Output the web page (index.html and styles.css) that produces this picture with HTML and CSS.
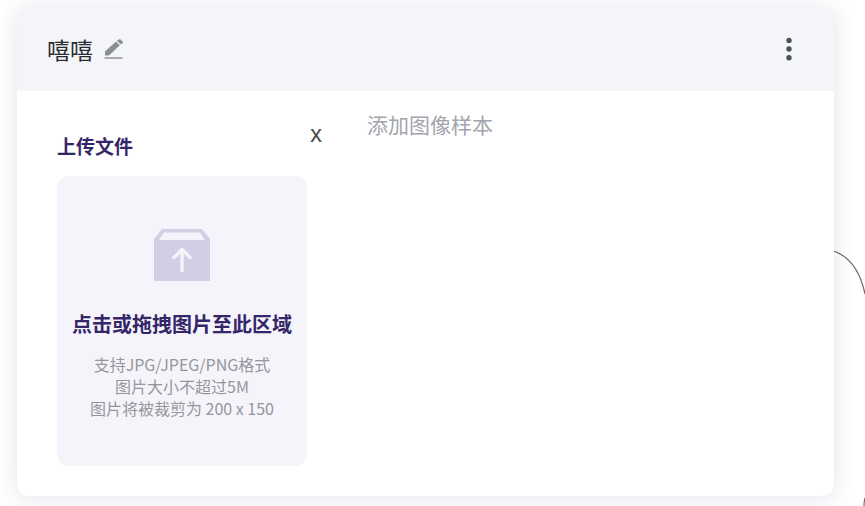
FILE: index.html
```html
<!DOCTYPE html>
<html lang="zh-CN">
<head>
<meta charset="utf-8">
<meta name="viewport" content="width=device-width, initial-scale=1">
<title>嘻嘻</title>
<link rel="stylesheet" href="styles.css">
</head>
<body>
<main class="canvas">
  <section class="card">
    <header class="card-header">
      <h1 class="card-title">嘻嘻</h1>
      <button class="icon-button" type="button" aria-label="编辑名称">
        <svg width="20" height="20" viewBox="0 0 20 20" fill="#8b8d95">
          <path d="M1 16.500V12.500L12 2.500l3.800 3.800L5 16.500z"/>
          <path d="M13 1.800 14.600.5Q15.700-.2 16.600.6L18.600 2.600Q19.200 3.500 18.500 4.200L16.800 5.600z"/>
          <path d="M.5 18h18v2H.5z" fill="#a9abb0"/>
        </svg>
      </button>
      <button class="icon-button menu-button" type="button" aria-label="更多">
        <svg width="6" height="24" viewBox="0 0 6 24" fill="#4d5058">
          <circle cx="3" cy="3.400" r="2.700"/>
          <circle cx="3" cy="12" r="2.700"/>
          <circle cx="3" cy="20.700" r="2.700"/>
        </svg>
      </button>
    </header>
    <div class="card-body">
      <div class="upload">
        <h2 class="upload-title">上传文件</h2>
        <button class="dropzone" type="button">
          <svg width="56" height="52" viewBox="0 0 56 52">
            <path d="M8 0h40l8 10v42H0V10z" fill="#d3cee6"/>
            <path d="M10 3.500h36l5 7.500H5z" fill="#f5f4fa"/>
            <path d="M28 41.500V21M20 28.500l8-8 8 8" fill="none" stroke="#f5f4fa" stroke-width="3.500" stroke-linecap="round" stroke-linejoin="round"/>
          </svg>
          <strong class="dropzone-title">点击或拖拽图片至此区域</strong>
          <span class="dropzone-hint">支持JPG/JPEG/PNG格式<br>图片大小不超过5M<br>图片将被裁剪为 200 x 150</span>
        </button>
      </div>
      <button class="close-button" type="button" aria-label="关闭">x</button>
      <p class="sample-label">添加图像样本</p>
    </div>
  </section>
  <svg class="connector" width="31" height="260" viewBox="0 0 31 260" fill="none" stroke="#6c6c6c" stroke-width="1.200">
    <path d="M0 5C16 11 26 24 31 48M31 252Q30 255 30 260"/>
  </svg>
</main>
</body>
</html>
```
FILE: styles.css
```css
* {
  box-sizing: border-box;
}

body {
  margin: 0;
  background: #fff;
  font-family: "Noto Sans CJK SC", "Noto Sans", sans-serif;
}

h1,
h2,
p {
  margin: 0;
}

button {
  padding: 0;
  border: 0;
  background: none;
  font: inherit;
  cursor: pointer;
}

svg {
  display: block;
}

.canvas {
  position: relative;
  min-height: 100vh;
  padding: 7px 31px 10px 17px;
  overflow: hidden;
}

.card {
  border-radius: 12px;
  background: #fff;
  box-shadow: 0 2px 24px rgba(60, 64, 110, 0.14);
  overflow: hidden;
}

.card-header {
  display: flex;
  align-items: center;
  gap: 11px;
  height: 84px;
  padding: 0 42px 0 30px;
  background: #f4f5f8;
}

.card-title {
  color: #292c30;
  font-size: 23px;
  font-weight: 400;
  line-height: 32px;
}

.menu-button {
  margin-left: auto;
}

.card-body {
  display: flex;
  align-items: flex-start;
  padding: 20px 40px 30px;
}

.upload {
  flex: 0 0 250px;
  padding-top: 20px;
}

.upload-title {
  color: #342669;
  font-size: 19px;
  font-weight: 700;
  line-height: 30px;
}

.dropzone {
  display: flex;
  flex-direction: column;
  align-items: center;
  width: 100%;
  margin-top: 15px;
  padding: 53px 8px 47px;
  border-radius: 12px;
  background: #f5f4fa;
}

.dropzone-title {
  margin-top: 28px;
  color: #342669;
  font-size: 20px;
  font-weight: 700;
  line-height: 30px;
  white-space: nowrap;
}

.dropzone-hint {
  margin-top: 14px;
  color: #95969d;
  font-size: 16px;
  line-height: 22px;
  white-space: nowrap;
}

.close-button {
  width: 18px;
  margin-top: 10px;
  color: #4a4d50;
  font-family: "Noto Sans", sans-serif;
  font-size: 23px;
  line-height: 24px;
}

.sample-label {
  margin-left: 42px;
  color: #a2a5ae;
  font-size: 21px;
  line-height: 26px;
}

.connector {
  position: absolute;
  top: 246px;
  right: 0;
}
```
